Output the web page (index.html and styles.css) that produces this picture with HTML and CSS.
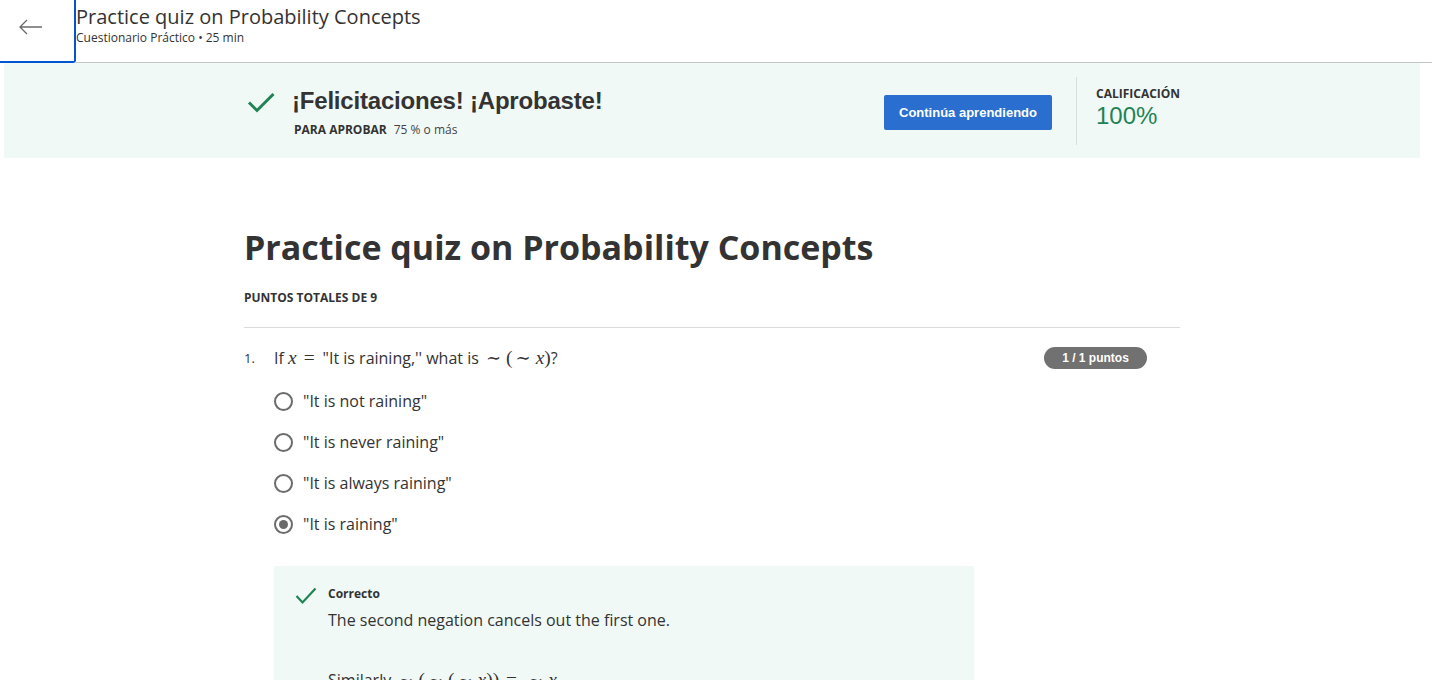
FILE: index.html
```html
<!DOCTYPE html>
<html lang="es">
<head>
<meta charset="utf-8">
<title>Practice quiz on Probability Concepts</title>
<link rel="stylesheet" href="styles.css">
</head>
<body>
<header class="topbar">
  <a class="back" href="#" aria-label="Atrás">
    <svg width="26" height="18" viewBox="0 0 26 18" aria-hidden="true"><path d="M24 9H2M9 2L2 9l7 7" fill="none" stroke="#6a6a6a" stroke-width="1.3"/></svg>
  </a>
  <div class="titles">
    <div class="t1">Practice quiz on Probability Concepts</div>
    <div class="t2">Cuestionario Práctico • 25 min</div>
  </div>
</header>

<main class="page">
  <section class="banner">
    <div class="banner-inner">
      <div class="passed">
        <svg class="bigcheck" width="28" height="22" viewBox="0 0 28 22" aria-hidden="true"><path d="M2 10.5l8 8L26.5 2" fill="none" stroke="#1f8354" stroke-width="3"/></svg>
        <div class="passed-text">
          <div class="congrats">¡Felicitaciones! ¡Aprobaste!</div>
          <div class="pass-req"><b>PARA APROBAR</b><span>75 % o más</span></div>
        </div>
      </div>
      <button class="continue">Continúa aprendiendo</button>
      <div class="grade">
        <div class="grade-label">CALIFICACIÓN</div>
        <div class="grade-value">100%</div>
      </div>
    </div>
  </section>

  <section class="content">
    <h1 class="quiz-title">Practice quiz on Probability Concepts</h1>
    <div class="total">PUNTOS TOTALES DE 9</div>

    <div class="question">
      <div class="qnum">1.</div>
      <div class="qbody">
        <div class="qhead">
          <div class="qtext">If <span class="m"><i>x</i><span class="rel">=</span></span>"It is raining,'' what is <span class="m"><span class="sim">∼</span><span class="paren">(</span><span class="sim">∼</span><i>x</i><span class="paren">)</span></span>?</div>
          <div class="badge">1 / 1 puntos</div>
        </div>
        <ul class="options">
          <li><span class="radio"></span>"It is not raining"</li>
          <li><span class="radio"></span>"It is never raining"</li>
          <li><span class="radio"></span>"It is always raining"</li>
          <li><span class="radio on"></span>"It is raining"</li>
        </ul>
        <div class="feedback">
          <svg class="smallcheck" width="22" height="18" viewBox="0 0 22 18" aria-hidden="true"><path d="M1.5 9l6 6.5L20.5 1.5" fill="none" stroke="#1f8354" stroke-width="2.2"/></svg>
          <div class="fb-body">
            <div class="fb-title">Correcto</div>
            <p>The second negation cancels out the first one.</p>
            <p class="gap">Similarly <span class="m"><span class="sim">∼</span><span class="paren">(</span><span class="sim">∼</span><span class="paren">(</span><span class="sim">∼</span><i>x</i><span class="paren">))</span><span class="rel">=</span><span class="sim">∼</span><i>x</i></span></p>
          </div>
        </div>
      </div>
    </div>
  </section>
</main>
</body>
</html>
```
FILE: styles.css
```css
* { box-sizing: border-box; }
html, body { margin: 0; padding: 0; }
body {
  width: 1432px;
  height: 680px;
  overflow: hidden;
  background: #fff;
  font-family: "Open Sans", "Noto Sans", sans-serif;
  color: #333;
}

/* top bar */
.topbar {
  display: flex;
  height: 63px;
}
.back {
  width: 76px;
  height: 63px;
  flex: none;
  display: flex;
  align-items: center;
  justify-content: center;
  padding: 0 4px 10px 0;
  border-right: 2px solid #0056d2;
  border-bottom: 2px solid #0056d2;
  border-bottom-right-radius: 3px;
  background: #fff;
}
.back svg { display: block; margin-left: -8px; margin-top: 2px; }
.titles {
  flex: 1;
  border-bottom: 1px solid #c4c4c4;
  padding-top: 3px;
  color: #333;
}
.t1 { font-size: 20px; line-height: 27px; }
.t2 { font-size: 12px; line-height: 16px; }

/* page */
.page {
  padding: 0 12px 0 4px;
}
.banner {
  height: 95px;
  background: #f1f9f6;
}
.banner-inner {
  width: 936px;
  height: 100%;
  margin: 0 auto;
  display: flex;
  align-items: center;
}
.passed {
  display: flex;
  align-items: flex-start;
  margin-top: 4px;
}
.bigcheck { display: block; margin: 5px 17px 0 3px; flex: none; }
.congrats {
  font-family: "Liberation Sans", Arial, sans-serif;
  font-weight: 700;
  font-size: 24px;
  line-height: 28px;
  letter-spacing: -0.2px;
  color: #333;
}
.pass-req {
  margin-top: 7px;
  font-size: 12px;
  line-height: 16px;
  margin-left: 2px;
}
.pass-req b { font-weight: 700; color: #333; margin-right: 7px; }
.pass-req span { color: #444; }
.continue {
  margin-left: auto;
  margin-right: 24px;
  width: 168px;
  height: 35px;
  border: 0;
  border-radius: 2px;
  background: #2a6fcf;
  color: #fff;
  font-family: "Liberation Sans", Arial, sans-serif;
  font-weight: 700;
  font-size: 13px;
  padding: 0;
  margin-top: 3px;
}
.grade {
  width: 104px;
  height: 68px;
  border-left: 1px solid #d9dedc;
  padding: 9px 0 0 19px;
  margin-top: 1px;
}
.grade-label {
  font-size: 12px;
  font-weight: 700;
  line-height: 16px;
  color: #333;
}
.grade-value {
  margin-top: 1px;
  font-family: "Liberation Sans", Arial, sans-serif;
  font-size: 24px;
  line-height: 26px;
  color: #1f8354;
}

/* content */
.content {
  width: 936px;
  margin: 0 auto;
}
.quiz-title {
  margin: 66px 0 0;
  font-size: 34px;
  line-height: 46px;
  font-weight: 700;
  color: #333;
}
.total {
  margin-top: 20px;
  font-size: 12px;
  line-height: 16px;
  font-weight: 700;
  padding-bottom: 21px;
  border-bottom: 1px solid #dadada;
}
.question {
  display: flex;
  padding-top: 18px;
}
.qnum {
  width: 30px;
  flex: none;
  font-size: 13px;
  line-height: 24px;
  color: #333;
}
.qbody { flex: 1; }
.qhead {
  display: flex;
  align-items: flex-start;
}
.qtext {
  font-size: 16px;
  line-height: 24px;
  color: #333;
}
.m { font-family: "Liberation Serif", "DejaVu Serif", serif; font-size: 19.4px; line-height: 1; }
.m i { font-style: italic; }
.rel { margin: 0 8px 0 7px; }
.sim { font-family: "DejaVu Serif", serif; font-size: 18px; margin: 0 5px 0 3px; }
.paren { font-size: 19.4px; }
.badge {
  margin-left: auto;
  margin-right: 33px;
  margin-top: 0.5px;
  width: 103px;
  height: 22px;
  border-radius: 11px;
  background: #717171;
  color: #fff;
  font-family: "Liberation Sans", Arial, sans-serif;
  font-weight: 700;
  font-size: 12px;
  line-height: 22px;
  text-align: center;
}
.options {
  list-style: none;
  margin: 19px 0 0;
  padding: 0;
  display: flex;
  flex-direction: column;
  gap: 17px;
}
.options li {
  display: flex;
  align-items: center;
  font-size: 16px;
  line-height: 24px;
  color: #333;
}
.radio {
  width: 19px;
  height: 19px;
  border: 2px solid #6b6b6b;
  border-radius: 50%;
  margin-right: 10px;
  flex: none;
  display: flex;
  align-items: center;
  justify-content: center;
}
.radio.on::after {
  content: "";
  width: 9px;
  height: 9px;
  border-radius: 50%;
  background: #6b6b6b;
}
.feedback {
  margin-top: 30px;
  width: 700px;
  background: #f1f9f6;
  display: flex;
  align-items: flex-start;
  padding: 20px 20px 40px 21px;
}
.smallcheck { display: block; flex: none; margin: 1px 11px 0 0; }
.fb-title {
  font-size: 12px;
  line-height: 16px;
  font-weight: 700;
}
.fb-body p {
  margin: 6px 0 0;
  font-size: 16px;
  line-height: 24px;
  color: #333;
}
.fb-body p.gap { margin-top: 36px; }
```
